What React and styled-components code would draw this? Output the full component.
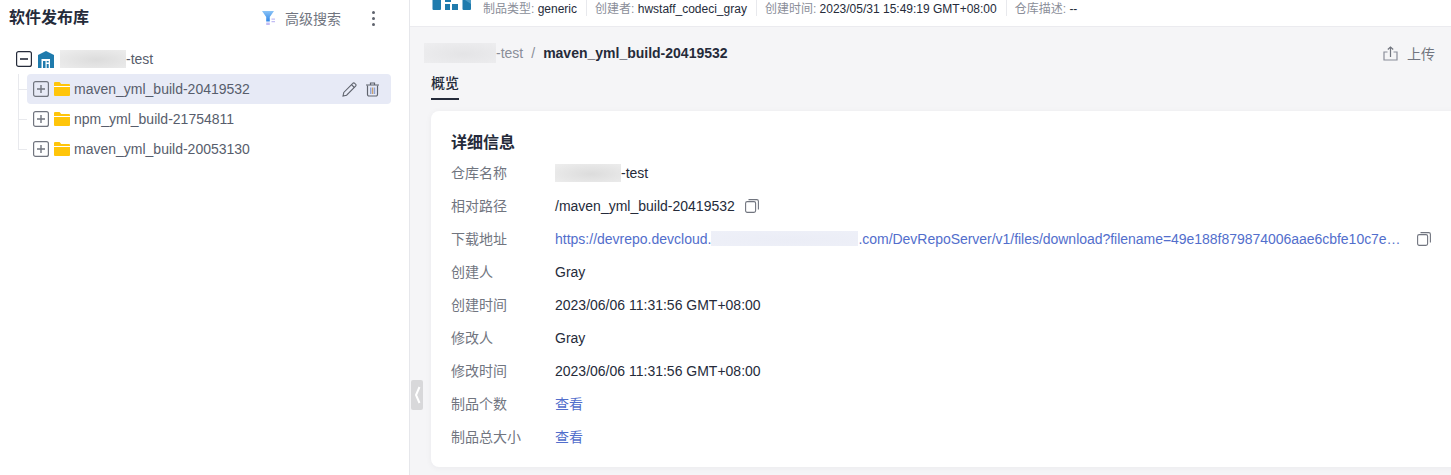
import React from "react";
import styled, { createGlobalStyle } from "styled-components";

const Global = createGlobalStyle`
  html, body { margin: 0; padding: 0; background: #fff; overflow: hidden; }
  body { font-family: "Liberation Sans", "Noto Sans CJK SC", sans-serif; font-size: 14px; color: #252b3a; }
  * { box-sizing: border-box; }
`;
const Page = styled.div`display: flex; width: 1451px; height: 475px; overflow: hidden;`;
const Sidebar = styled.aside`width: 410px; flex: none; background: #fff; border-right: 1px solid #e6e7eb; padding: 0 18px 0 9px;`;
const SideHead = styled.div`display: flex; align-items: center; height: 36px; margin-bottom: 8px;`;
const SideTitle = styled.h2`margin: 0; font-size: 16px; font-weight: 700; color: #252b3a; flex: 1; line-height: 36px;`;
const SearchBtn = styled.div`display: flex; align-items: center; gap: 9px; color: #71757f; font-size: 14px; margin-right: 31px;`;
const More = styled.div`display: flex; flex-direction: column; gap: 3px; margin-right: 16px;`;
const Dot = styled.i`display: block; width: 3px; height: 3px; border-radius: 50%; background: #5f636d;`;
const Tree = styled.div`display: flex; flex-direction: column; padding-left: 7px;`;
const RootRow = styled.div`display: flex; align-items: center; height: 30px; color: #575d6c; font-size: 14px;`;
const Branch = styled.div`position: relative; padding-left: 11px; display: flex; flex-direction: column;
  &::before { content: ""; position: absolute; left: 2px; top: 0; width: 1px; height: 75px; background: #e8e9ed; }`;
const Row = styled.div`position: relative; display: flex; align-items: center; height: 30px; border-radius: 4px; padding: 0 11px 0 6px;
  background: ${p => (p.$active ? "#e7eaf6" : "transparent")}; color: #575d6c; font-size: 14px;
  &::before { content: ""; position: absolute; left: -9px; top: 15px; width: 9px; height: 1px; background: #e8e9ed; }`;
const Toggle = styled.span`display: inline-flex; width: 16px; height: 16px; flex: none; margin-right: ${p => p.$mr ?? 5}px;`;
const Folder = styled.span`display: inline-flex; width: 16px; height: 14px; flex: none; margin-right: 4px;`;
const RowName = styled.span`flex: 1;`;
const RowIcons = styled.span`display: flex; align-items: center; gap: 8px;`;
const Blur = styled.span`display: inline-block; flex: none; width: ${p => p.$w}px; height: ${p => p.$h}px; vertical-align: middle;
  background: radial-gradient(ellipse at 55% 55%, ${p => p.$c || "#dcdcdc"} 0%, ${p => p.$e || "#eeeeee"} 100%);`;
const Main = styled.main`flex: 1; min-width: 0; background: #f5f5f7; display: flex; flex-direction: column; position: relative;`;
const TopBar = styled.div`height: 27px; flex: none; background: #fff; border-bottom: 1px solid #ebebef; display: flex; align-items: flex-start; padding-left: 22px; overflow: hidden;`;
const Logo = styled.span`display: flex; height: 10px; width: 39px; flex: none; margin-right: 12px;`;
const Meta = styled.span`font-size: 12px; color: #8a8e99; line-height: 18px; height: 16px; padding-right: 9px; margin-right: 8px; border-right: 1px solid #e8e9ed; white-space: nowrap;
  &:last-child { border-right: 0; }`;
const MetaValue = styled.span`color: #252b3a;`;
const Content = styled.div`flex: 1; min-height: 0; padding: 0 0 0 21px; display: flex; flex-direction: column;`;
const CrumbBar = styled.div`display: flex; align-items: center; height: 20px; margin: 16px 0 0 -7px; padding-right: 16px; font-size: 14px; color: #8a8e99;`;
const CrumbSep = styled.span`margin: 0 8px;`;
const CrumbNow = styled.span`font-weight: 700; color: #252b3a; flex: 1;`;
const Upload = styled.span`display: flex; align-items: center; gap: 9px; color: #71757f; font-size: 14px;`;
const Tabs = styled.div`display: flex; margin-top: 10px;`;
const Tab = styled.div`font-size: 14px; line-height: 20px; border-bottom: 2px solid #252b3a; color: #252b3a; font-weight: 500; height: 27px; width: 28px;`;
const Card = styled.section`margin-top: 11px; height: 356px; width: 1040px; background: #fff; border-radius: 8px 0 0 8px; padding: 20px 20px 0; box-shadow: 0 1px 6px rgba(37,43,58,.05);`;
const CardTitle = styled.h3`margin: 0 0 1px; font-size: 16px; font-weight: 700; line-height: 24px; color: #252b3a;`;
const Detail = styled.div`display: flex; flex-direction: column;`;
const DetailRow = styled.div`display: flex; align-items: center; height: 33px; font-size: 14px; color: #252b3a;`;
const Label = styled.span`width: 104px; flex: none; font-size: 14px; color: #71757f; padding-bottom: 2px;`;
const Val = styled.span`display: flex; align-items: center; white-space: nowrap;`;
const Link = styled.a`color: #526ecc; text-decoration: none; display: flex; align-items: center; padding-bottom: ${p => (p.$cjk ? 2 : 0)}px;`;
const LinkTail = styled.span`letter-spacing: -0.03px;`;
const CopyWrap = styled.span`display: inline-flex; margin-left: ${p => p.$ml}px;`;
const Handle = styled.div`position: absolute; left: 1px; top: 380px; width: 12px; height: 30px; background: #d8d8da; border-radius: 2px; display: flex; align-items: center; justify-content: center;`;

const Plus = ({ minus, dark }) => (
  <svg width="16" height="16" viewBox="0 0 16 16" fill="none">
    <rect x=".6" y=".6" width="14.8" height="14.8" rx="2" stroke={dark ? "#252b3a" : "#71757f"} strokeWidth="1.2" />
    <path d={minus ? "M4 8h8" : "M4 8h8M8 4v8"} stroke={dark ? "#252b3a" : "#71757f"} strokeWidth={dark ? 1.6 : 1.4} />
  </svg>
);
const FolderIcon = () => (
  <svg width="16" height="14" viewBox="0 0 16 14">
    <path d="M0 1a1 1 0 0 1 1-1h4.6l1.6 2H15a1 1 0 0 1 1 1v10a1 1 0 0 1-1 1H1a1 1 0 0 1-1-1z" fill="#ffc50a" />
    <path d="M0 4h16v1H0z" fill="#fff" />
  </svg>
);
const RepoIcon = () => (
  <svg width="16" height="17" viewBox="0 0 16 17" style={{ margin: "0 6px 0 6px", flex: "none" }}>
    <path d="M0 4 8 0l8 4v13H0z" fill="#1f7bad" />
    <path d="M3.500 8H12v9H3.500z" fill="#fff" />
    <path d="M5 10h2.500v7H5zM8.700 13h2v4h-2zM8.700 10h2v1.500h-2z" fill="#1f7bad" />
  </svg>
);
const Copy = () => (
  <svg width="14" height="14" viewBox="0 0 14 14" fill="none" stroke="#71757f" strokeWidth="1.1">
    <rect x=".6" y="2.600" width="10" height="10.800" rx="1.600" />
    <path d="M3.500 .6h8.300a1.600 1.600 0 0 1 1.600 1.600v8.300" />
  </svg>
);
const Filter = () => (
  <svg width="14" height="15" viewBox="0 0 14 15">
    <defs>
      <linearGradient id="fg" x1="0" y1="0" x2="0" y2="1">
        <stop offset="0" stopColor="#8cc4f7" /><stop offset="1" stopColor="#2f86e6" />
      </linearGradient>
    </defs>
    <path d="M0 0h12L7.800 6v4.500H4.200V6z" fill="url(#fg)" />
    <path d="M9.500 7.500h3.500v1.200H9.500zM9.500 10h3.500v1.200H9.500zM4.200 11.500h3.600V14H4.200z" fill="#c2bdf4" />
  </svg>
);
const Pencil = () => (
  <svg width="15" height="15" viewBox="0 0 15 15" fill="none" stroke="#5f636d" strokeWidth="1.1">
    <path d="M1 14l.8-3.600L10.800 1.300a1.300 1.300 0 0 1 1.900 0l.9.900a1.300 1.300 0 0 1 0 1.900L4.600 13.200z" />
    <path d="M9.500 2.700l2.800 2.800" />
  </svg>
);
const Trash = () => (
  <svg width="15" height="15" viewBox="0 0 15 15" fill="none">
    <path d="M1 3h13M5.500 3V1h4v2" stroke="#5f636d" strokeWidth="1.200" />
    <path d="M2.500 3.500v9a1.500 1.500 0 0 0 1.500 1.500h7a1.500 1.500 0 0 0 1.500-1.500v-9" stroke="#5f636d" strokeWidth="1.200" />
    <path d="M5 5.500h1.400v6.500H5z" fill="#8fa5d8" /><path d="M6.900 5.500h1.400v6.500H6.900z" fill="#c9a070" /><path d="M8.800 5.500h1.400v6.500H8.800z" fill="#8fa5d8" />
  </svg>
);
const UploadIcon = () => (
  <svg width="15" height="15" viewBox="0 0 15 15" fill="none" stroke="#8a8e99" strokeWidth="1.200">
    <path d="M4.500 6H1v8h13V6h-3.500" />
    <path d="M7.500 11V1M4.800 3.500 7.500 1l2.700 2.500" stroke="#71757f" />
  </svg>
);
const LogoMark = () => (
  <svg width="39" height="10" viewBox="0 0 39 10">
    <path d="M.5 0h8.500v9a1 1 0 0 1-1 1H1.500a1 1 0 0 1-1-1z" fill="#1f7bad" />
    <path d="M13 0h6v2H13z" fill="#1f7bad" />
    <path d="M13 4h5v6h-5zM20 4h6v6h-6z" fill="#1f7bad" />
    <path d="M30.500 0h8.500v9a1 1 0 0 1-1 1h-6.500a1 1 0 0 1-1-1z" fill="#1f7bad" />
    <path d="M33 0h6v4z" fill="#4b9ac4" />
  </svg>
);

const tree = [
  { name: "maven_yml_build-20419532", active: true },
  { name: "npm_yml_build-21754811" },
  { name: "maven_yml_build-20053130" },
];

export default function App() {
  return (
    <Page>
      <Global />
      <Sidebar>
        <SideHead>
          <SideTitle>软件发布库</SideTitle>
          <SearchBtn><Filter />高级搜索</SearchBtn>
          <More><Dot /><Dot /><Dot /></More>
        </SideHead>
        <Tree>
          <RootRow>
            <Toggle $mr={0}><Plus minus dark /></Toggle>
            <RepoIcon />
            <Blur $w={66} $h={18} />-test
          </RootRow>
          <Branch>
            {tree.map(t => (
              <Row key={t.name} $active={t.active}>
                <Toggle><Plus /></Toggle>
                <Folder><FolderIcon /></Folder>
                <RowName>{t.name}</RowName>
                {t.active && <RowIcons><Pencil /><Trash /></RowIcons>}
              </Row>
            ))}
          </Branch>
        </Tree>
      </Sidebar>
      <Main>
        <TopBar>
          <Logo><LogoMark /></Logo>
          <Meta>制品类型: <MetaValue>generic</MetaValue></Meta>
          <Meta>创建者: <MetaValue>hwstaff_codeci_gray</MetaValue></Meta>
          <Meta>创建时间: <MetaValue>2023/05/31 15:49:19 GMT+08:00</MetaValue></Meta>
          <Meta>仓库描述: <MetaValue>--</MetaValue></Meta>
        </TopBar>
        <Content>
          <CrumbBar>
            <Blur $w={72} $h={20} $c="#e4e4e6" $e="#eeeef0" />
            <span>-test</span>
            <CrumbSep>/</CrumbSep>
            <CrumbNow>maven_yml_build-20419532</CrumbNow>
            <Upload><UploadIcon />上传</Upload>
          </CrumbBar>
          <Tabs><Tab>概览</Tab></Tabs>
          <Card>
            <CardTitle>详细信息</CardTitle>
            <Detail>
              <DetailRow><Label>仓库名称</Label><Val><Blur $w={66} $h={18} />-test</Val></DetailRow>
              <DetailRow><Label>相对路径</Label><Val>/maven_yml_build-20419532<CopyWrap $ml={10}><Copy /></CopyWrap></Val></DetailRow>
              <DetailRow><Label>下载地址</Label><Val>
                <Link>https://devrepo.devcloud.<Blur $w={147} $h={15} $c="#ebedf6" $e="#eef0f8" /><LinkTail>.com/DevRepoServer/v1/files/download?filename=49e188f879874006aae6cbfe10c7e…</LinkTail></Link>
                <CopyWrap $ml={16}><Copy /></CopyWrap></Val></DetailRow>
              <DetailRow><Label>创建人</Label><Val>Gray</Val></DetailRow>
              <DetailRow><Label>创建时间</Label><Val>2023/06/06 11:31:56 GMT+08:00</Val></DetailRow>
              <DetailRow><Label>修改人</Label><Val>Gray</Val></DetailRow>
              <DetailRow><Label>修改时间</Label><Val>2023/06/06 11:31:56 GMT+08:00</Val></DetailRow>
              <DetailRow><Label>制品个数</Label><Val><Link $cjk>查看</Link></Val></DetailRow>
              <DetailRow><Label>制品总大小</Label><Val><Link $cjk>查看</Link></Val></DetailRow>
            </Detail>
          </Card>
        </Content>
        <Handle>
          <svg width="7" height="18" viewBox="0 0 7 18" fill="none"><path d="M5.500 1 2 9l3.500 8" stroke="#fff" strokeWidth="2" /></svg>
        </Handle>
      </Main>
    </Page>
  );
}
